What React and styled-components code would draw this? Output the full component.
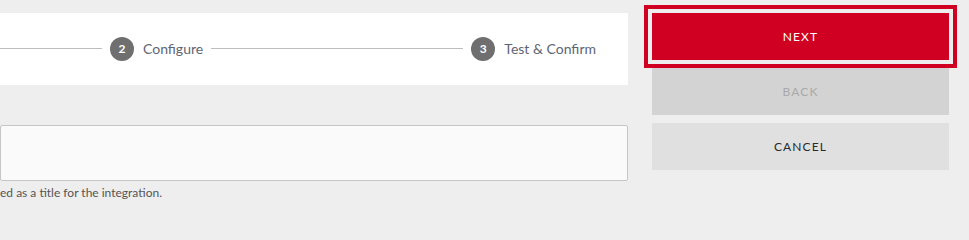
import React from 'react'
import styled, { createGlobalStyle } from 'styled-components'

const GlobalStyle = createGlobalStyle`
body{
  margin:0;
  background:#eeeeee;
  font-family:Lato,"Noto Sans",sans-serif;
  overflow:hidden;
}
`

const Page = styled.div`
display:flex;
align-items:flex-start;
padding-top:13px;
width:969px;
height:205px;
box-sizing:border-box;
`

const Main = styled.div`
width:628px;
display:flex;
flex-direction:column;
`

const Stepper = styled.div`
height:72px;
background:#fff;
display:flex;
align-items:center;
padding-right:32px;
padding-bottom:1px;
box-sizing:border-box;
`

const Connector = styled.div`
height:1px;
background:#bdbdbd;
flex:${(props) => (props.width ? 'none' : '1')};
width:${(props) => (props.width ? props.width + 'px' : 'auto')};
margin:0 8px 0 ${(props) => (props.width ? '0' : '8px')};
`

const Circle = styled.span`
width:24px;
height:24px;
border-radius:50%;
background:#6f6f6f;
color:#fff;
font-size:12px;
font-weight:700;
display:flex;
align-items:center;
justify-content:center;
flex:none;
`

const StepLabel = styled.span`
font-size:14px;
color:#5d6573;
margin-left:9px;
white-space:nowrap;
`

const Field = styled.div`
margin-top:40px;
height:56px;
background:#fafafa;
border:1px solid #c6c6c6;
border-radius:2px;
box-sizing:border-box;
`

const Hint = styled.div`
margin-top:4px;
font-size:12px;
color:#555;
white-space:nowrap;
`

const Actions = styled.div`
width:297px;
margin-left:24px;
display:flex;
flex-direction:column;
gap:7px;
`

const Button = styled.button`
height:47px;
width:100%;
border:none;
border-radius:0;
font-family:Lato,"Noto Sans",sans-serif;
font-size:12px;
letter-spacing:1.1px;
text-transform:uppercase;
cursor:pointer;
background:${(props) => (props.variant === 'primary' ? '#cf0022' : props.variant === 'disabled' ? '#d3d3d3' : '#e0e0e0')};
color:${(props) => (props.variant === 'primary' ? '#fff' : props.variant === 'disabled' ? '#a9a9a9' : '#2a2a2a')};
outline:${(props) => (props.focused ? '4px solid #cf0022' : 'none')};
outline-offset:4px;
& + & { margin-top:1px; }
`

const steps = [
  { n: 2, label: 'Configure' },
  { n: 3, label: 'Test & Confirm' },
]

export default function App() {
  return (
    <>
      <GlobalStyle />
      <Page>
        <Main>
          <Stepper>
            <Connector width={102} />
            {steps.map((s, i) => (
              <React.Fragment key={s.n}>
                {i > 0 && <Connector />}
                <Circle>{s.n}</Circle>
                <StepLabel>{s.label}</StepLabel>
              </React.Fragment>
            ))}
          </Stepper>
          <Field />
          <Hint>ed as a title for the integration.</Hint>
        </Main>
        <Actions>
          <Button variant="primary" focused>Next</Button>
          <Button variant="disabled" disabled>Back</Button>
          <Button>Cancel</Button>
        </Actions>
      </Page>
    </>
  )
}
